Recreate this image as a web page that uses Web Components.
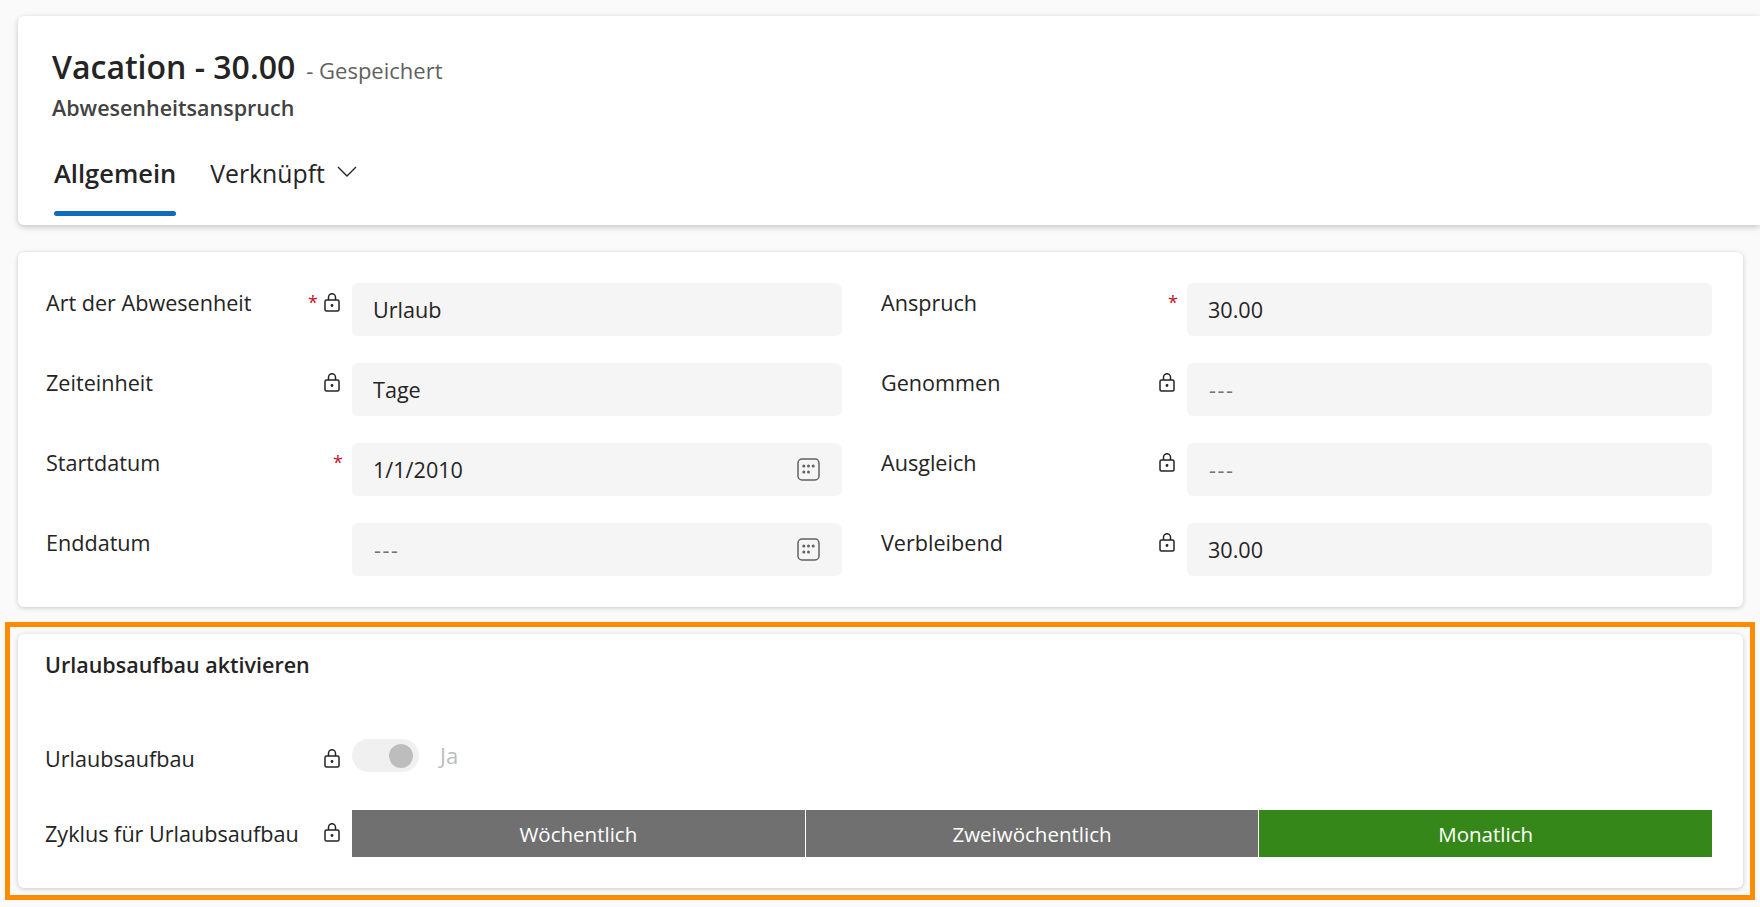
<!DOCTYPE html>
<html lang="de">
<head>
<meta charset="utf-8">
<title>Vacation - 30.00</title>
<style>
    html, body { margin: 0; height: 100%; overflow: hidden; }
    body {
        background: #fafafa;
        color: #242424;
        font-family: "Open Sans", "Noto Sans", sans-serif;
        font-size: 21.6px;
    }
    .stack { display: grid; grid-template-columns: 796px 831px; column-gap: 39px; row-gap: 27px; }
    .rows { display: flex; flex-direction: column; }
</style>
</head>
<body>
<app-page>
    <record-header title="Vacation - 30.00" state="- Gespeichert" entity="Abwesenheitsanspruch"></record-header>
    <form-card>
        <div class="stack">
            <form-field label="Art der Abwesenheit" required locked value="Urlaub"></form-field>
            <form-field label="Anspruch" required value="30.00"></form-field>
            <form-field label="Zeiteinheit" locked value="Tage"></form-field>
            <form-field label="Genommen" locked value="---" empty></form-field>
            <form-field label="Startdatum" required value="1/1/2010" calendar></form-field>
            <form-field label="Ausgleich" locked value="---" empty></form-field>
            <form-field label="Enddatum" value="---" empty calendar></form-field>
            <form-field label="Verbleibend" locked value="30.00"></form-field>
        </div>
    </form-card>
    <highlight-frame>
        <form-card heading="Urlaubsaufbau aktivieren">
            <div class="rows">
                <toggle-row label="Urlaubsaufbau" text="Ja"></toggle-row>
                <choice-row label="Zyklus für Urlaubsaufbau" options="Wöchentlich,Zweiwöchentlich,Monatlich" selected="2"></choice-row>
            </div>
        </form-card>
    </highlight-frame>
</app-page>

<script>
const lockSvg = `<svg width="16" height="19" viewBox="0 0 16 19" fill="none" stroke="#242424" stroke-width="1.5">
    <path d="M4.5 7V4.2a3.5 3.5 0 0 1 7 0V7"/>
    <rect x="1" y="7" width="14" height="11" rx="1.5"/>
    <circle cx="8" cy="12.5" r="1.4" fill="#242424" stroke="none"/>
</svg>`;

const calendarSvg = `<svg width="23" height="23" viewBox="0 0 23 23" fill="none">
    <rect x="1" y="1" width="21" height="21" rx="4" stroke="#616161" stroke-width="1.5"/>
    <g fill="#616161">
        <circle cx="6.8" cy="8" r="1.5"/><circle cx="11.5" cy="8" r="1.5"/><circle cx="16.2" cy="8" r="1.5"/>
        <circle cx="6.8" cy="14" r="1.5"/><circle cx="11.5" cy="14" r="1.5"/>
    </g>
</svg>`;

// label column shared by all the rows: label, then star or lock at its right end
const labelStyles = `
    .label { width: 306px; flex: none; display: flex; height: 39px; align-items: center; box-sizing: border-box; padding-right: 12px; }
    .label span { flex: 1; white-space: nowrap; }
    .star { color: #c50f1f; font-size: 18px; font-style: normal; position: relative; top: -1px; margin-right: -3px; }
    .star + .lock { margin-left: 9px; }
    .lock { display: flex; }
`;

class AppPage extends HTMLElement {
    constructor() {
        super();
        this.attachShadow({ mode: 'open' });
        this.shadowRoot.innerHTML = `
            <style>
                :host { display: flex; flex-direction: column; padding-top: 16px; }
                ::slotted(record-header) { margin: 0 0 27px 18px; }
                ::slotted(form-card) { margin: 0 17px 15px 18px; }
            </style>
            <slot></slot>
        `;
    }
}

class RecordHeader extends HTMLElement {
    constructor() {
        super();
        this.attachShadow({ mode: 'open' });
    }

    connectedCallback() {
        this.shadowRoot.innerHTML = `
            <style>
                :host {
                    display: block;
                    height: 209px;
                    background: #fff;
                    border-radius: 6px 0 0 6px;
                    box-shadow: 0 2px 6px rgba(0, 0, 0, .22);
                    box-sizing: border-box;
                    padding: 29px 0 0 34px;
                }
                .top { display: flex; align-items: baseline; gap: 11px; height: 44px; }
                h1 { margin: 0; font-size: 32px; font-weight: 600; line-height: 44px; }
                .state { font-size: 22px; color: #616161; }
                .entity { font-size: 21.5px; font-weight: 600; color: #424242; line-height: 30px; margin-top: 4px; }
                nav { display: flex; margin: 33px 0 0 2px; font-size: 24.8px; line-height: 34px; }
                .tab { height: 60px; box-sizing: border-box; position: relative; display: flex; gap: 12px; }
                .tab.on { font-size: 25.5px; font-weight: 600; margin-right: 34px; }
                .tab.on::after {
                    content: ''; position: absolute; left: 0; right: 0; bottom: 0; height: 5px;
                    background: #0f6cbd; border-radius: 3px;
                }
                .tab svg { margin-top: 10px; }
            </style>
            <div class="top"><h1>${this.getAttribute('title')}</h1><span class="state">${this.getAttribute('state')}</span></div>
            <div class="entity">${this.getAttribute('entity')}</div>
            <nav>
                <div class="tab on">Allgemein</div>
                <div class="tab">Verknüpft
                    <svg width="20" height="11" viewBox="0 0 20 11" fill="none" stroke="#242424" stroke-width="1.4"><path d="M1 1l9 9 9-9"/></svg>
                </div>
            </nav>
        `;
    }
}

class FormCard extends HTMLElement {
    constructor() {
        super();
        this.attachShadow({ mode: 'open' });
    }

    connectedCallback() {
        const heading = this.getAttribute('heading');
        this.shadowRoot.innerHTML = `
            <style>
                :host {
                    display: block;
                    background: #fff;
                    border-radius: 6px;
                    box-shadow: 0 1px 5px rgba(0, 0, 0, .2);
                    box-sizing: border-box;
                    padding: 31px 31px 31px 28px;
                }
                :host([heading]) { padding-top: 18px; }
                h2 { margin: 0 0 60px -1px; font-size: 21.5px; font-weight: 600; line-height: 26px; padding-bottom: 1px; }
            </style>
            ${heading ? `<h2>${heading}</h2>` : ''}
            <slot></slot>
        `;
    }
}

class HighlightFrame extends HTMLElement {
    constructor() {
        super();
        this.attachShadow({ mode: 'open' });
        this.shadowRoot.innerHTML = `
            <style>
                :host {
                    display: block;
                    margin: 0 5px;
                    border: 5px solid #ff8c00;
                    padding: 7px 7px 7px 8px;
                }
            </style>
            <slot></slot>
        `;
    }
}

class FormField extends HTMLElement {
    constructor() {
        super();
        this.attachShadow({ mode: 'open' });
    }

    connectedCallback() {
        const empty = this.hasAttribute('empty');
        this.shadowRoot.innerHTML = `
            <style>
                :host { display: flex; align-items: flex-start; }
                ${labelStyles}
                .box {
                    flex: 1;
                    height: 53px;
                    background: #f5f5f5;
                    border-radius: 6px;
                    box-sizing: border-box;
                    padding: 0 22px 0 21px;
                    display: flex;
                    align-items: center;
                    justify-content: space-between;
                    font-size: 21.6px;
                    color: ${empty ? '#757575' : '#242424'};
                }
                .text { letter-spacing: ${empty ? '1.5px' : '0'}; margin-left: ${empty ? '1px' : '0'}; }
            </style>
            <div class="label">
                <span>${this.getAttribute('label')}</span>
                ${this.hasAttribute('required') ? '<i class="star">*</i>' : ''}
                ${this.hasAttribute('locked') ? `<div class="lock">${lockSvg}</div>` : ''}
            </div>
            <div class="box">
                <div class="text">${this.getAttribute('value')}</div>
                ${this.hasAttribute('calendar') ? calendarSvg : ''}
            </div>
        `;
    }
}

class ToggleRow extends HTMLElement {
    constructor() {
        super();
        this.attachShadow({ mode: 'open' });
    }

    connectedCallback() {
        this.shadowRoot.innerHTML = `
            <style>
                :host { display: flex; align-items: flex-start; height: 33px; margin-bottom: 38px; }
                ${labelStyles}
                .label span { margin-left: -1px; }
                .track {
                    width: 67px; height: 33px; border-radius: 17px; background: #f0f0f0;
                    display: flex; align-items: center; justify-content: flex-end;
                    padding-right: 6px; box-sizing: border-box;
                }
                .knob { width: 24px; height: 24px; border-radius: 50%; background: #bdbdbd; }
                .text { margin-left: 21px; color: #bdbdbd; line-height: 33px; font-size: 22px; }
            </style>
            <div class="label"><span>${this.getAttribute('label')}</span><div class="lock">${lockSvg}</div></div>
            <div class="track"><div class="knob"></div></div>
            <div class="text">${this.getAttribute('text')}</div>
        `;
    }
}

class ChoiceRow extends HTMLElement {
    constructor() {
        super();
        this.attachShadow({ mode: 'open' });
    }

    connectedCallback() {
        const selected = Number(this.getAttribute('selected'));
        const options = this.getAttribute('options').split(',');
        this.shadowRoot.innerHTML = `
            <style>
                :host { display: flex; align-items: center; }
                ${labelStyles}
                .label span { margin-left: -1px; }
                .lock { margin-top: -3px; }
                .options { flex: 1; display: flex; gap: 1px; }
                .option {
                    flex: 1; height: 47px; display: flex; align-items: center; justify-content: center;
                    background: #707070; color: #fff; font-size: 20.5px;
                }
                .option.on { background: #36871a; }
            </style>
            <div class="label"><span>${this.getAttribute('label')}</span><div class="lock">${lockSvg}</div></div>
            <div class="options">
                ${options.map((o, i) => `<div class="option${i === selected ? ' on' : ''}">${o}</div>`).join('')}
            </div>
        `;
    }
}

customElements.define('app-page', AppPage);
customElements.define('record-header', RecordHeader);
customElements.define('form-card', FormCard);
customElements.define('highlight-frame', HighlightFrame);
customElements.define('form-field', FormField);
customElements.define('toggle-row', ToggleRow);
customElements.define('choice-row', ChoiceRow);
</script>
</body>
</html>
